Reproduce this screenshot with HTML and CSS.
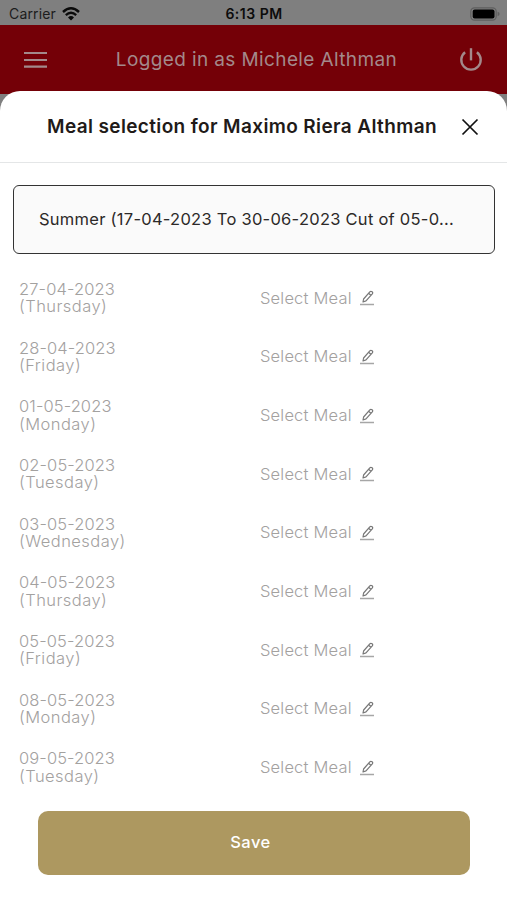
FILE: index.html
```html
<!DOCTYPE html>
<html lang="en">
<head>
    <meta charset="UTF-8">
    <title>Meal selection</title>
    <link rel="stylesheet" href="styles.css">
</head>
<body>
    <svg class="defs" width="0" height="0">
        <symbol id="edit" viewBox="0 0 14 16">
            <path d="M3 12 L3.6 9 L9.8 1.9 Q10.8 .9 12.1 1.8 Q13.2 2.7 12.3 3.9 L6 10.9 Z M8.6 3.3 L10.9 5.3" fill="none" stroke="#777" stroke-width="1.2" stroke-linejoin="round"/>
            <path d="M0 14.5 H14" stroke="#a6a6a6" stroke-width="1.5"/>
        </symbol>
    </svg>
    <div class="status">
        <div class="carrier">
            <span>Carrier</span>
            <svg width="18" height="14" viewBox="0 0 18 14">
                <path d="M1 5 Q9 -2.4 17 5" fill="none" stroke="#0a0a0a" stroke-width="2.4"/>
                <path d="M3.8 8.2 Q9 3.4 14.2 8.2" fill="none" stroke="#0a0a0a" stroke-width="2.3"/>
                <path d="M6 10.4 Q9 7.8 12 10.4 L9 13.5 Z" fill="#0a0a0a"/>
            </svg>
        </div>
        <span class="time">6:13 PM</span>
        <svg class="battery" width="31" height="14" viewBox="0 0 31 14">
            <rect x=".8" y=".8" width="25.4" height="12.4" rx="3.6" fill="none" stroke="#5f5f5f" stroke-width="1.2"/>
            <rect x="2.7" y="2.5" width="21.8" height="9" rx="2" fill="#000"/>
            <path d="M27.6 4.8 Q29.6 5.4 29.6 7 Q29.6 8.6 27.6 9.2 Z" fill="#5f5f5f"/>
        </svg>
    </div>
    <div class="header">
        <svg width="24" height="18" viewBox="0 0 24 18">
            <path d="M0 2 H23 M0 9 H23 M0 15.6 H23" stroke="#a3898b" stroke-width="2.2"/>
        </svg>
        <span class="user">Logged in as Michele Althman</span>
        <svg width="24" height="26" viewBox="0 0 24 26">
            <path d="M6.1 5.2 A9.7 9.7 0 1 0 17.9 5.2" fill="none" stroke="#a3898b" stroke-width="2.4"/>
            <path d="M12 1.2 V13.4" stroke="#a3898b" stroke-width="2.4"/>
        </svg>
    </div>
    <div class="sheet">
        <div class="title">
            <h1>Meal selection for Maximo Riera Althman</h1>
            <svg width="18" height="18" viewBox="0 0 18 18">
                <path d="M1.5 1.5 L16.5 16.5 M16.5 1.5 L1.5 16.5" stroke="#111" stroke-width="1.7"/>
            </svg>
        </div>
        <div class="select"><span>Summer (17-04-2023 To 30-06-2023 Cut of 05-0...</span></div>
        <ul class="days">
            <li><div class="date"><p>27-04-2023</p><p class="day">(Thursday)</p></div><span class="meal">Select Meal</span><svg class="edit"><use href="#edit"/></svg></li>
            <li><div class="date"><p>28-04-2023</p><p class="day">(Friday)</p></div><span class="meal">Select Meal</span><svg class="edit"><use href="#edit"/></svg></li>
            <li><div class="date"><p>01-05-2023</p><p class="day">(Monday)</p></div><span class="meal">Select Meal</span><svg class="edit"><use href="#edit"/></svg></li>
            <li><div class="date"><p>02-05-2023</p><p class="day">(Tuesday)</p></div><span class="meal">Select Meal</span><svg class="edit"><use href="#edit"/></svg></li>
            <li><div class="date"><p>03-05-2023</p><p class="day">(Wednesday)</p></div><span class="meal">Select Meal</span><svg class="edit"><use href="#edit"/></svg></li>
            <li><div class="date"><p>04-05-2023</p><p class="day">(Thursday)</p></div><span class="meal">Select Meal</span><svg class="edit"><use href="#edit"/></svg></li>
            <li><div class="date"><p>05-05-2023</p><p class="day">(Friday)</p></div><span class="meal">Select Meal</span><svg class="edit"><use href="#edit"/></svg></li>
            <li><div class="date"><p>08-05-2023</p><p class="day">(Monday)</p></div><span class="meal">Select Meal</span><svg class="edit"><use href="#edit"/></svg></li>
            <li><div class="date"><p>09-05-2023</p><p class="day">(Tuesday)</p></div><span class="meal">Select Meal</span><svg class="edit"><use href="#edit"/></svg></li>
        </ul>
        <button class="save">Save</button>
    </div>
</body>
</html>
```
FILE: styles.css
```css
*{
    padding: 0;
    margin: 0;
    box-sizing: border-box;
}
ul{
    list-style: none;
}
body{
    height: 900px;
    background: #7f7f7f;
    font-family: Inter, "Liberation Sans", sans-serif;
    white-space: nowrap;
    overflow: hidden;
}
.defs{
    display: block;
}
.status{
    height: 25px;
    padding: 2px 6px 0 9px;
    display: grid;
    grid-template-columns: 1fr auto 1fr;
    align-items: center;
    font-size: 14px;
    color: #1c1c1c;
}
.carrier{
    display: flex;
    align-items: center;
    gap: 6px;
    letter-spacing: 0.15px;
}
.time{
    font-weight: 600;
    letter-spacing: 0.5px;
    margin-right: 2px;
    color: #0c0c0c;
}
.battery{
    justify-self: end;
}
.header{
    height: 69px;
    padding: 0 24px;
    background: #740007;
    display: flex;
    align-items: center;
    justify-content: space-between;
}
.user{
    margin-left: 6px;
    font-size: 19px;
    color: #a3898b;
    letter-spacing: 0.38px;
}
.sheet{
    height: 809px;
    margin-top: -3px;
    background: #fff;
    border-radius: 20px 20px 0 0;
    position: relative;
}
.title{
    height: 72px;
    padding: 0 28px 0 47px;
    border-bottom: 1px solid #e4e6e7;
    display: flex;
    align-items: center;
    justify-content: space-between;
}
.title h1{
    font-size: 19px;
    font-weight: 600;
    letter-spacing: 0.37px;
    color: #211a18;
}
.select{
    height: 69px;
    margin: 22px 12px 0 13px;
    padding: 0 25px 2px;
    border: 1.5px solid #333;
    border-radius: 6px;
    background: #fafafa;
    display: flex;
    align-items: center;
    font-size: 16.5px;
    letter-spacing: 0.26px;
    color: #2c2928;
}
.days{
    padding: 15px 19px 0;
}
.days li{
    height: 58.67px;
    display: flex;
    align-items: center;
    font-size: 16.5px;
    font-weight: 300;
    color: #a3a19f;
}
.date{
    width: 241px;
    line-height: 17.4px;
    letter-spacing: 0.1px;
}
.day{
    letter-spacing: 0.45px;
}
.meal{
    letter-spacing: 0.18px;
    padding-bottom: 1px;
}
.edit{
    width: 14px;
    height: 16px;
    margin-left: 8px;
}
.save{
    display: block;
    width: 432px;
    height: 64px;
    margin: 14px 0 0 38px;
    padding-right: 7px;
    padding-bottom: 1px;
    border: none;
    border-radius: 10px;
    background: #ad9860;
    color: #fff;
    font-family: inherit;
    font-size: 16.5px;
    font-weight: 500;
    letter-spacing: 0.5px;
}
```
